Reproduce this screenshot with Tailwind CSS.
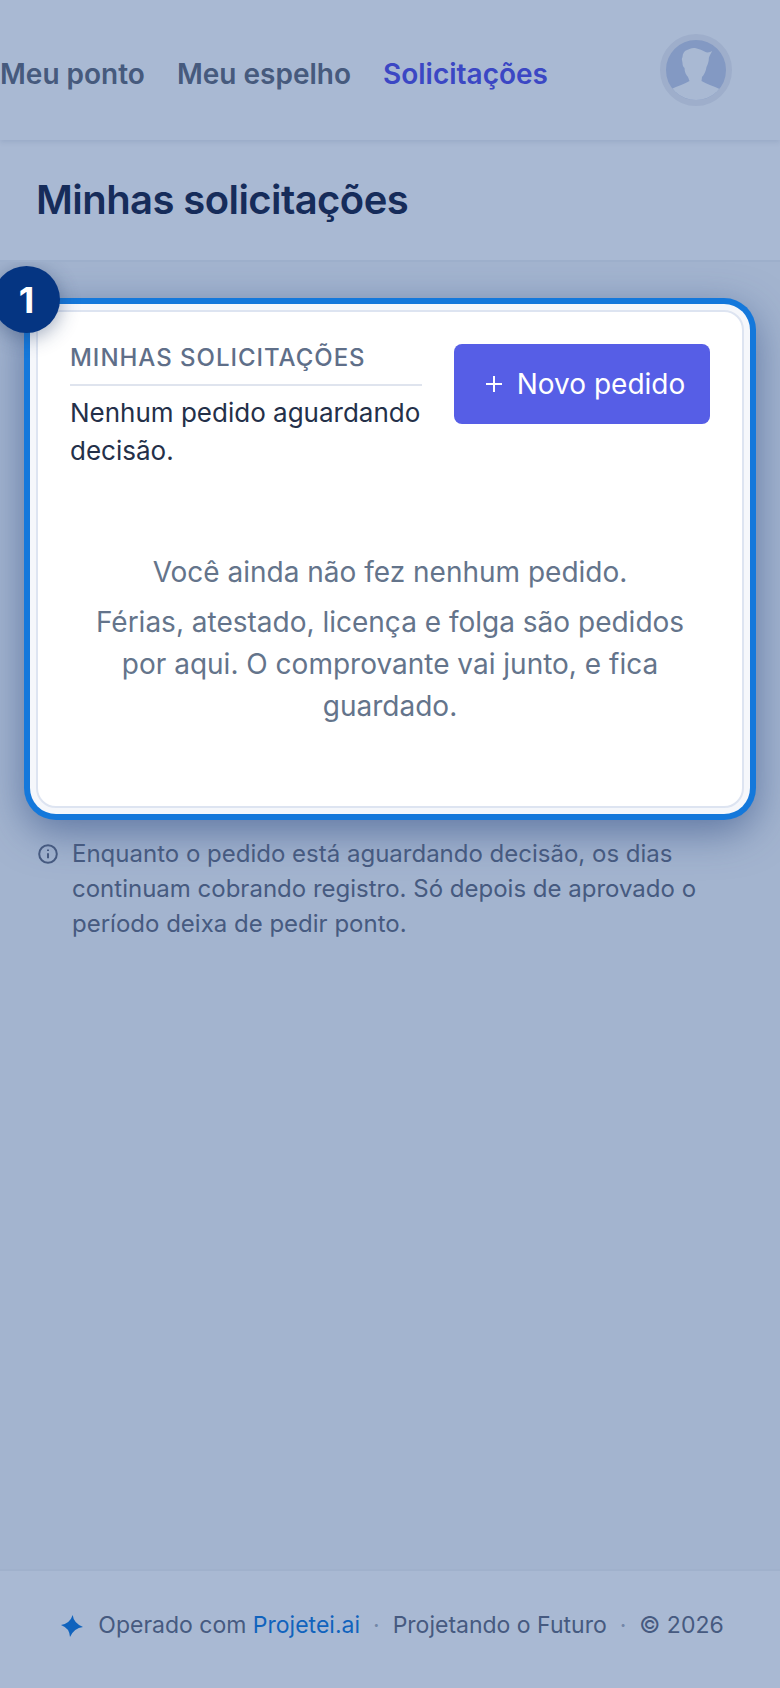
<!DOCTYPE html>
<html lang="pt-BR">

<head>
  <meta charset="UTF-8" />
  <meta name="viewport" content="width=device-width, initial-scale=1.0" />
  <title>Minhas solicitações</title>
  <script src="https://cdn.jsdelivr.net/npm/@tailwindcss/browser@4"></script>
</head>

<body class="font-['Inter',sans-serif] bg-[#a3b4cf] overflow-hidden">
  <div class="w-[780px] h-[1688px] flex flex-col overflow-hidden">

    <header class="relative z-20 h-[140px] shrink-0 flex items-center justify-between pr-[48px] bg-[#a9b9d3] shadow-[0_2px_5px_rgba(60,85,130,0.14)]">
      <nav class="flex items-center gap-[32px] text-[28px] font-semibold text-[#465a7d] pt-[8px]">
        <a>Meu ponto</a>
        <a>Meu espelho</a>
        <a class="text-[#3b47c4]">Solicitações</a>
      </nav>
      <div class="w-[72px] h-[72px] rounded-full border-[6px] border-[#9eaecb] bg-[#8399c3] overflow-hidden">
        <svg viewBox="0 0 60 60" class="w-[60px] h-[60px] block">
          <path fill="#a9b9d3" d="M29 8 C26 7.5 23 9 21 10 C18 11 16.5 14 16.5 17 L15.8 19 L16.5 23 C16.5 26 17.5 27 18.5 28 C18.5 32 20 35 22 37 L23.5 41 C18 44.5 11 46 5.5 49 C11 60 20 62 30 62 C40 62 49 58 53.5 49 C48 46 41 44.5 35.5 41 L36 37 C38 35 40 31 40.5 27 C42 24 43 21 42.8 18 C43.5 15.5 45 13.5 46.2 11 C44 12.5 41 13 38.5 11.5 C36 10 32.5 9 29 8Z" />
        </svg>
      </div>
    </header>

    <div class="relative z-10 h-[122px] shrink-0 flex items-center px-[36px] bg-[#a9b9d3] border-b-2 border-[#9dafcb]">
      <h1 class="text-[40px] font-semibold tracking-[-0.57px] text-[#162c5a]">Minhas solicitações</h1>
    </div>

    <main class="flex-1 pt-[48px] px-[36px]">
      <div class="relative rounded-[20px] bg-white border-2 border-[#dde4f1] h-[498px] px-[32px] pt-[32px] shadow-[0_0_0_6px_#f5f7fb,0_0_0_12px_#1478db,0_12px_40px_12px_rgba(40,70,125,0.55)]">
        <div class="absolute -left-[45px] -top-[46px] w-[67px] h-[67px] rounded-full bg-[#053582] flex items-center justify-center text-white text-[36px] font-bold shadow-[0_4px_20px_rgba(30,55,100,0.45)]">1</div>

        <div class="flex items-start gap-[32px]">
          <div class="w-[352px]">
            <h2 class="text-[24px] leading-[28px] font-medium tracking-[0.97px] text-[#5f6f89] pb-[12px] border-b-2 border-[#dfe4ee]">MINHAS SOLICITAÇÕES</h2>
            <p class="mt-[8px] text-[26px] leading-[38px] text-[#243049]">Nenhum pedido aguardando decisão.</p>
          </div>
          <button class="w-[256px] h-[80px] shrink-0 rounded-[8px] bg-[#565ee6] text-white text-[28px] font-normal flex items-center justify-center gap-[14px] pl-[6px]">
            <svg viewBox="0 0 18 18" class="w-[18px] h-[18px]"><path d="M9 1v16M1 9h16" stroke="currentColor" stroke-width="2" fill="none" /></svg>
            Novo pedido
          </button>
        </div>

        <div class="mt-[81px] text-center text-[28px] leading-[42px] text-[#64748b] px-[20px]">
          <p class="mb-[8px]">Você ainda não fez nenhum pedido.</p>
          <p>Férias, atestado, licença e folga são pedidos por aqui. O comprovante vai junto, e fica guardado.</p>
        </div>
      </div>

      <div class="relative mt-[28px] flex items-start gap-[14px] pl-[2px] text-[24px] leading-[35px] text-[#465a80]">
        <svg viewBox="0 0 20 20" class="w-[20px] h-[20px] shrink-0 mt-[8px]" fill="none" stroke="currentColor" stroke-width="2">
          <circle cx="10" cy="10" r="8.8" />
          <path d="M10 9.2v5M10 5.6v1.4" />
        </svg>
        <p>Enquanto o pedido está aguardando decisão, os dias continuam cobrando registro. Só depois de aprovado o período deixa de pedir ponto.</p>
      </div>
    </main>

    <footer class="relative z-10 h-[119px] shrink-0 flex items-center justify-center gap-[13px] bg-[#a9b9d3] border-t-2 border-[#a0b1cc] text-[23px] text-[#465a80] pb-[8px] pl-[4px]">
      <svg viewBox="0 0 24 24" class="w-[24px] h-[24px] mr-[1px]"><path fill="#1063bd" d="M12.7 1 Q13.5 9 23 13 Q14 14 10 23 Q9.5 14 1 11 Q10 9.5 12.7 1Z" /></svg>
      <span>Operado com <a class="text-[#1063bd]">Projetei.ai</a></span>
      <span class="text-[#7387a8]">·</span>
      <span>Projetando o Futuro</span>
      <span class="text-[#7387a8]">·</span>
      <span>© 2026</span>
    </footer>

  </div>
</body>

</html>
